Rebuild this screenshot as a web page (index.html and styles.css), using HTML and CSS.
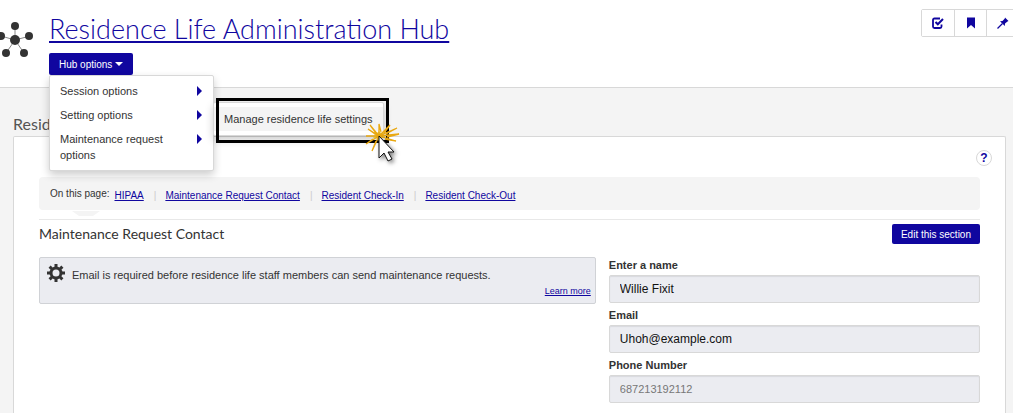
FILE: index.html
```html
<!DOCTYPE html>
<html lang="en">
<head>
    <meta charset="UTF-8">
    <meta name="viewport" content="width=device-width, initial-scale=1.0">
    <title>Residence Life Administration Hub</title>
    <link rel="stylesheet" href="styles.css">
</head>
<body>
    <header class="hub-header">
        <svg class="hub-icon" width="34" height="40" viewBox="0 0 34 40" aria-hidden="true">
            <path d="M15 19V5M15 19L30 15M15 19L1 15M15 19L6 32M15 19L24 32" stroke="#888" fill="none"/>
            <g fill="#333">
                <circle cx="15" cy="19" r="5"/>
                <circle cx="15" cy="5" r="4"/>
                <circle cx="29" cy="15" r="4"/>
                <circle cx="1" cy="15" r="4"/>
                <circle cx="6" cy="32" r="4"/>
                <circle cx="24" cy="32" r="4"/>
            </g>
        </svg>
        <div class="hub-title">
            <h1><a href="#">Residence Life Administration Hub</a></h1>
            <div class="hub-options">
                <button class="button" type="button">Hub options <span class="caret"></span></button>
                <ul class="menu">
                    <li><a href="#">Session options</a><span class="arrow"></span></li>
                    <li>
                        <a href="#">Setting options</a><span class="arrow"></span>
                        <ul class="submenu">
                            <li><a href="#">Manage residence life settings</a></li>
                        </ul>
                        <div class="highlight"></div>
                        <svg class="pointer" width="40" height="48" viewBox="0 0 40 48" aria-hidden="true">
                            <path d="M18 9L20 11L24 10L22 13L25 15L21 16L18 19L15 16L12 16L14 13L12 10L16 11Z" fill="#dcc450"/>
                            <path d="M18 14L9 3L15 11M18 14L18 2L20 10M18 14L29 3L23 11M18 14L36 6L25 12M18 14L38 12L26 15M18 14L35 19L24 17M18 14L11 29L15 19M18 14L5 22L12 17M18 14L5 14M18 14L7 7L14 12" stroke="#e9a811" stroke-width="1.300" fill="none"/>
                            <path class="arrow-cursor" d="M18 14V36L23 31L27 39L31 37L27 30H33Z" fill="#fff" stroke="#111"/>
                        </svg>
                    </li>
                    <li><a href="#">Maintenance request options</a><span class="arrow"></span></li>
                </ul>
            </div>
        </div>
        <div class="toolbar">
            <button type="button" aria-label="Tasks">
                <svg width="12" height="12" viewBox="0 0 12 12"><path d="M8 1.5H2.5Q1 1.500 1 3V9.500Q1 11 2.500 11H8Q9.500 11 9.500 9.500V7.500" fill="none" stroke="#10069f" stroke-width="1.800"/><path d="M3.500 5L5.800 7.300L11 2" fill="none" stroke="#10069f" stroke-width="2"/></svg>
            </button>
            <button type="button" aria-label="Bookmark">
                <svg width="12" height="12" viewBox="0 0 12 12"><path d="M2 0.500H10V11.500L6 8L2 11.500Z" fill="#10069f"/></svg>
            </button>
            <button type="button" aria-label="Pin">
                <svg width="12" height="12" viewBox="0 0 12 12"><path d="M8 0.500L11.500 4L10.500 4.500L8 6.500L7.800 9L3 4.300L5.500 4L7.800 1.500Z" fill="#10069f"/><path d="M5.500 6.500L0.500 11.500" stroke="#10069f" stroke-width="1.300"/></svg>
            </button>
        </div>
    </header>

    <main>
        <h2 class="page-title">Resid</h2>
        <div class="panel">
            <button class="help" type="button">?</button>
            <nav class="page-nav">
                <span>On this page:</span>
                <ul>
                    <li><a href="#">HIPAA</a></li>
                    <li><a href="#contact">Maintenance Request Contact</a></li>
                    <li><a href="#">Resident Check-In</a></li>
                    <li><a href="#">Resident Check-Out</a></li>
                </ul>
            </nav>
            <div class="nav-tab"></div>
            <section id="contact">
                <div class="section-header">
                    <h3>Maintenance Request Contact</h3>
                    <button class="button" type="button">Edit this section</button>
                </div>
                <div class="columns">
                    <div class="info">
                        <div class="info-text">
                            <svg width="18" height="20" viewBox="0 0 18 20" aria-hidden="true">
                                <circle cx="9" cy="10" r="5" fill="none" stroke="#333" stroke-width="3"/>
                                <path d="M9 1V5M9 15V19M0 10H4M14 10H18M2.600 3.600L5.500 6.500M12.500 13.500L15.400 16.400M15.400 3.600L12.500 6.500M5.500 13.500L2.600 16.400" stroke="#333" stroke-width="3"/>
                            </svg>
                            <p>Email is required before residence life staff members can send maintenance requests.</p>
                        </div>
                        <a class="learn-more" href="#">Learn more</a>
                    </div>
                    <form class="contact-form">
                        <label for="name">Enter a name</label>
                        <input type="text" id="name" value="Willie Fixit" readonly>
                        <label for="email">Email</label>
                        <input type="email" id="email" value="Uhoh@example.com" readonly>
                        <label for="phone">Phone Number</label>
                        <input type="tel" id="phone" class="muted" value="687213192112" readonly>
                    </form>
                </div>
            </section>
        </div>
    </main>
</body>
</html>
```

FILE: styles.css
```css
* {
    box-sizing: border-box;
}
body {
    display: flex;
    flex-direction: column;
    min-height: 100vh;
    margin: 0;
    overflow-x: hidden;
    background-color: #f4f4f4;
    color: #333;
    font-family: "Liberation Sans", Arial, sans-serif;
    font-size: 11px;
    line-height: 16px;
}
h1, h2, h3, p, ul {
    margin: 0;
    padding: 0;
}
ul {
    list-style: none;
}
a {
    color: #10069f;
}
h1, h2, h3 {
    font-family: Lato, sans-serif;
    font-weight: 400;
}
.hub-header {
    display: flex;
    align-items: flex-start;
    height: 88px;
    background-color: #fff;
    border-bottom: 1px solid #d8d8d8;
}
.hub-icon {
    margin-top: 21px;
}
.hub-title {
    flex: 1;
    padding: 13px 0 0 15px;
}
h1 {
    height: 40px;
    font-size: 27px;
    font-weight: 300;
    line-height: 32px;
}
h1 a {
    text-decoration-thickness: 2px;
    text-underline-offset: 2px;
}
.button {
    height: 20px;
    padding: 0 9px;
    border: none;
    border-radius: 2px;
    background-color: #10069f;
    color: #fff;
    font-family: inherit;
    font-size: 10px;
    cursor: pointer;
}
.hub-options {
    position: relative;
    width: 165px;
}
.hub-options > .button {
    display: block;
    height: 22px;
    padding: 0 10px;
}
.caret {
    display: inline-block;
    border: 4px solid transparent;
    border-top-color: #fff;
    border-bottom: none;
    vertical-align: 2px;
}
.menu {
    position: absolute;
    top: 100%;
    left: 0;
    width: 100%;
    padding: 3px 10px;
    background-color: #fff;
    border: 1px solid #d8d8d8;
    border-radius: 2px;
    box-shadow: 0 4px 8px rgba(0, 0, 0, 0.2);
    z-index: 2;
}
.menu li {
    display: flex;
    justify-content: space-between;
    padding: 4px 0;
}
.menu a {
    max-width: 120px;
    color: #333;
    text-decoration: none;
}
.arrow {
    margin: 3px 1px 0 0;
    height: 10px;
    border: 5px solid transparent;
    border-left-color: #10069f;
    border-right: none;
}
.submenu {
    position: absolute;
    top: 26px;
    left: 100%;
    padding: 4px 0;
    background-color: #fff;
    border: 1px solid #d8d8d8;
    border-radius: 2px;
    box-shadow: 0 4px 8px rgba(0, 0, 0, 0.2);
    white-space: nowrap;
}
.menu .submenu li {
    padding: 4px 10px;
    background-color: #f4f4f4;
}
.menu .submenu a {
    max-width: none;
}
.highlight {
    position: absolute;
    top: 22px;
    left: 166px;
    width: 173px;
    height: 45px;
    border: 3px solid #000;
}
.pointer {
    position: absolute;
    top: 46px;
    left: 311px;
}
.arrow-cursor {
    filter: drop-shadow(2px 2px 2px rgba(0, 0, 0, 0.5));
}
.toolbar {
    display: flex;
    margin: 9px -6px 0 0;
    border: 1px solid #d8d8d8;
    border-radius: 2px;
}
.toolbar button {
    width: 32px;
    height: 26px;
    padding: 0;
    border: none;
    background-color: #fff;
    line-height: 0;
}
.toolbar button + button {
    border-left: 1px solid #d8d8d8;
}
main {
    display: flex;
    flex: 1;
    flex-direction: column;
    padding: 24px 7px 0 13px;
}
.page-title {
    height: 24px;
    color: #555;
    font-size: 16px;
    line-height: 24px;
}
.panel {
    display: flex;
    flex: 1;
    flex-direction: column;
    padding: 13px 25px 10px;
    background-color: #fff;
    border: 1px solid #d8d8d8;
    border-bottom: none;
    border-radius: 2px 2px 0 0;
}
.help {
    align-self: flex-end;
    width: 16px;
    height: 16px;
    margin: 0 -12px 11px 0;
    padding: 0;
    border: 1px solid #d8d8d8;
    border-radius: 50%;
    background-color: #fff;
    color: #10069f;
    font-family: inherit;
    font-size: 12px;
    font-weight: bold;
    line-height: 14px;
}
.page-nav {
    display: flex;
    gap: 5px;
    height: 33px;
    padding: 9px 11px;
    border-radius: 4px;
    background-color: #f4f4f4;
    font-size: 10px;
}
.page-nav ul {
    display: flex;
    padding-top: 2px;
}
.page-nav li + li::before {
    content: "|";
    margin: 0 9px 0 10px;
    color: #ccc;
}
.nav-tab {
    width: 28px;
    height: 5px;
    margin: 1px 0 3px 33px;
    background-color: #f4f4f4;
    clip-path: polygon(0 0, 100% 0, 75% 100%, 25% 100%);
}
.section-header {
    display: flex;
    align-items: center;
    justify-content: space-between;
    height: 38px;
    padding-bottom: 9px;
    border-top: 1px solid #e8e8e8;
}
h3 {
    font-size: 14px;
}
.columns {
    display: grid;
    grid-template-columns: 3fr 2fr;
    align-items: start;
    gap: 13px;
}
.info {
    display: flex;
    flex-direction: column;
    padding: 5px 4px 4px 7px;
    border: 1px solid #d0d2d6;
    border-radius: 2px;
    background-color: #ebecf1;
}
.info-text {
    display: flex;
    gap: 7px;
}
.info-text p {
    padding-top: 4px;
}
.learn-more {
    align-self: flex-end;
    font-size: 9px;
}
.contact-form {
    display: flex;
    flex-direction: column;
}
.contact-form label {
    margin-bottom: 2px;
    font-weight: bold;
}
.contact-form input {
    height: 28px;
    margin-bottom: 4px;
    padding: 0 10px;
    border: 1px solid #d8d8d8;
    border-radius: 2px;
    background-color: #ebecf1;
    box-shadow: inset 0 1px 1px rgba(0, 0, 0, 0.08);
    color: #111;
    font-family: inherit;
    font-size: 12px;
}
.contact-form .muted {
    color: #777;
    font-size: 11px;
}
```
